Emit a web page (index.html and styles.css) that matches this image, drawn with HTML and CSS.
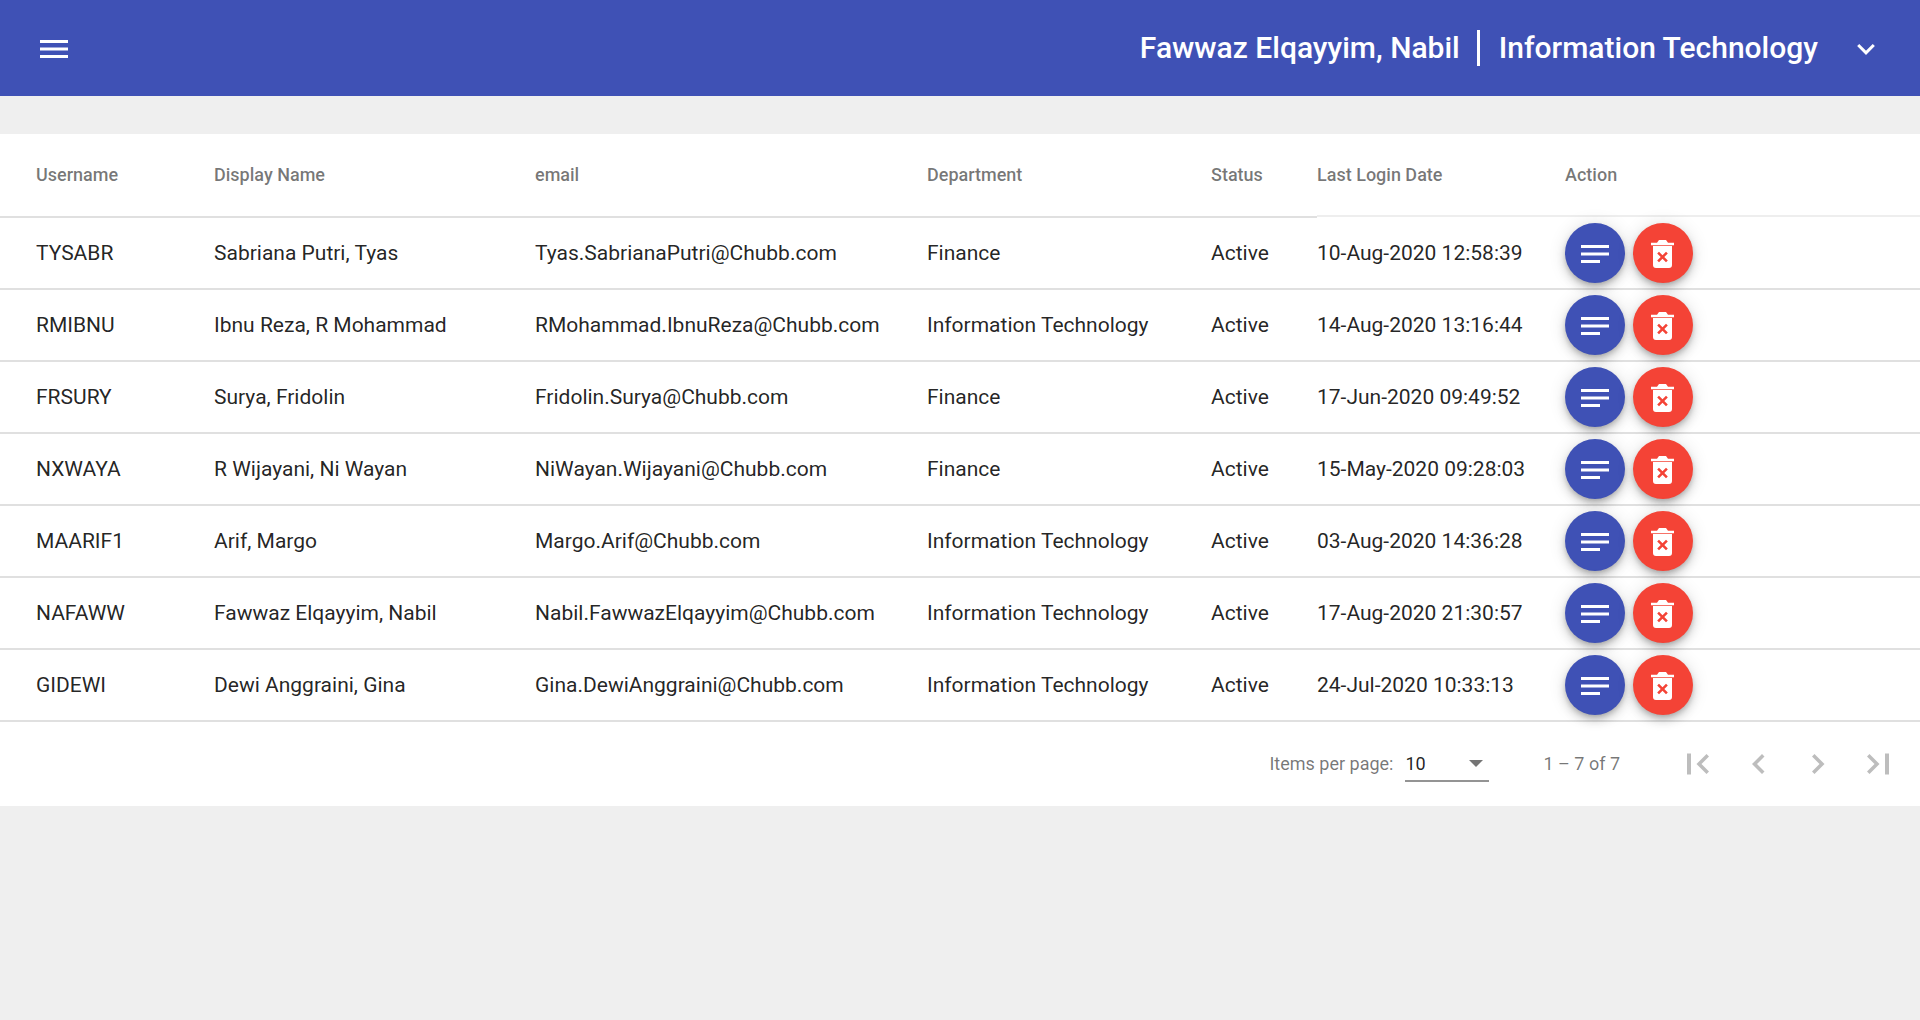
FILE: index.html
```html
<!DOCTYPE html>
<html lang="en">
<head>
<meta charset="utf-8">
<title>Users</title>
<link rel="stylesheet" href="styles.css">
</head>
<body>
<header class="topbar">
  <button class="menu-btn" aria-label="Menu">
    <svg width="28" height="18" viewBox="0 0 28 18"><path d="M0 0h28v3H0zM0 7.500h28v3H0zM0 15h28v3H0z" fill="#fff"/></svg>
  </button>
  <div class="user">
    <span class="user-name">Fawwaz Elqayyim, Nabil</span>
    <span class="user-dept">Information Technology</span>
    <svg class="user-caret" width="20" height="14" viewBox="0 0 20 14"><path d="M2.200 2 10 9.800 17.800 2" fill="none" stroke="#fff" stroke-width="3"/></svg>
  </div>
</header>
<main class="content">
  <section class="card">
    <table class="grid">
      <colgroup>
        <col class="c1"><col class="c2"><col class="c3"><col class="c4"><col class="c5"><col class="c6"><col class="c7">
      </colgroup>
      <thead>
        <tr>
          <th>Username</th><th>Display Name</th><th>email</th><th>Department</th><th>Status</th><th class="th-alt">Last Login Date</th><th class="th-alt">Action</th>
        </tr>
      </thead>
      <tbody>
        <tr><td>TYSABR</td><td>Sabriana Putri, Tyas</td><td>Tyas.SabrianaPutri@Chubb.com</td><td>Finance</td><td>Active</td><td>10-Aug-2020 12:58:39</td><td><div class="actions"><button class="fab fab-blue" aria-label="Details"><svg class="i-notes" viewBox="0 0 28 18"><path d="M0 0h28v3H0zM0 7.500h28v3H0zM0 15h19v3H0z"/></svg></button><button class="fab fab-red" aria-label="Delete"><svg class="i-trash" viewBox="0 0 23 28"><path d="M0 2.800h6L8 0h7l2 2.800h6v2.500H0zM2 6h19v19a3 3 0 0 1-3 3H5a3 3 0 0 1-3-3zM11.500 15.200 8 11.700 6.200 13.500 9.700 17 6.200 20.500 8 22.300 11.500 18.800 15 22.300 16.800 20.500 13.300 17 16.800 13.500 15 11.700z" fill-rule="evenodd"/></svg></button></div></td></tr>
        <tr><td>RMIBNU</td><td>Ibnu Reza, R Mohammad</td><td>RMohammad.IbnuReza@Chubb.com</td><td>Information Technology</td><td>Active</td><td>14-Aug-2020 13:16:44</td><td><div class="actions"><button class="fab fab-blue" aria-label="Details"><svg class="i-notes" viewBox="0 0 28 18"><path d="M0 0h28v3H0zM0 7.500h28v3H0zM0 15h19v3H0z"/></svg></button><button class="fab fab-red" aria-label="Delete"><svg class="i-trash" viewBox="0 0 23 28"><path d="M0 2.800h6L8 0h7l2 2.800h6v2.500H0zM2 6h19v19a3 3 0 0 1-3 3H5a3 3 0 0 1-3-3zM11.500 15.200 8 11.700 6.200 13.500 9.700 17 6.200 20.500 8 22.300 11.500 18.800 15 22.300 16.800 20.500 13.300 17 16.800 13.500 15 11.700z" fill-rule="evenodd"/></svg></button></div></td></tr>
        <tr><td>FRSURY</td><td>Surya, Fridolin</td><td>Fridolin.Surya@Chubb.com</td><td>Finance</td><td>Active</td><td>17-Jun-2020 09:49:52</td><td><div class="actions"><button class="fab fab-blue" aria-label="Details"><svg class="i-notes" viewBox="0 0 28 18"><path d="M0 0h28v3H0zM0 7.500h28v3H0zM0 15h19v3H0z"/></svg></button><button class="fab fab-red" aria-label="Delete"><svg class="i-trash" viewBox="0 0 23 28"><path d="M0 2.800h6L8 0h7l2 2.800h6v2.500H0zM2 6h19v19a3 3 0 0 1-3 3H5a3 3 0 0 1-3-3zM11.500 15.200 8 11.700 6.200 13.500 9.700 17 6.200 20.500 8 22.300 11.500 18.800 15 22.300 16.800 20.500 13.300 17 16.800 13.500 15 11.700z" fill-rule="evenodd"/></svg></button></div></td></tr>
        <tr><td>NXWAYA</td><td>R Wijayani, Ni Wayan</td><td>NiWayan.Wijayani@Chubb.com</td><td>Finance</td><td>Active</td><td>15-May-2020 09:28:03</td><td><div class="actions"><button class="fab fab-blue" aria-label="Details"><svg class="i-notes" viewBox="0 0 28 18"><path d="M0 0h28v3H0zM0 7.500h28v3H0zM0 15h19v3H0z"/></svg></button><button class="fab fab-red" aria-label="Delete"><svg class="i-trash" viewBox="0 0 23 28"><path d="M0 2.800h6L8 0h7l2 2.800h6v2.500H0zM2 6h19v19a3 3 0 0 1-3 3H5a3 3 0 0 1-3-3zM11.500 15.200 8 11.700 6.200 13.500 9.700 17 6.200 20.500 8 22.300 11.500 18.800 15 22.300 16.800 20.500 13.300 17 16.800 13.500 15 11.700z" fill-rule="evenodd"/></svg></button></div></td></tr>
        <tr><td>MAARIF1</td><td>Arif, Margo</td><td>Margo.Arif@Chubb.com</td><td>Information Technology</td><td>Active</td><td>03-Aug-2020 14:36:28</td><td><div class="actions"><button class="fab fab-blue" aria-label="Details"><svg class="i-notes" viewBox="0 0 28 18"><path d="M0 0h28v3H0zM0 7.500h28v3H0zM0 15h19v3H0z"/></svg></button><button class="fab fab-red" aria-label="Delete"><svg class="i-trash" viewBox="0 0 23 28"><path d="M0 2.800h6L8 0h7l2 2.800h6v2.500H0zM2 6h19v19a3 3 0 0 1-3 3H5a3 3 0 0 1-3-3zM11.500 15.200 8 11.700 6.200 13.500 9.700 17 6.200 20.500 8 22.300 11.500 18.800 15 22.300 16.800 20.500 13.300 17 16.800 13.500 15 11.700z" fill-rule="evenodd"/></svg></button></div></td></tr>
        <tr><td>NAFAWW</td><td>Fawwaz Elqayyim, Nabil</td><td>Nabil.FawwazElqayyim@Chubb.com</td><td>Information Technology</td><td>Active</td><td>17-Aug-2020 21:30:57</td><td><div class="actions"><button class="fab fab-blue" aria-label="Details"><svg class="i-notes" viewBox="0 0 28 18"><path d="M0 0h28v3H0zM0 7.500h28v3H0zM0 15h19v3H0z"/></svg></button><button class="fab fab-red" aria-label="Delete"><svg class="i-trash" viewBox="0 0 23 28"><path d="M0 2.800h6L8 0h7l2 2.800h6v2.500H0zM2 6h19v19a3 3 0 0 1-3 3H5a3 3 0 0 1-3-3zM11.500 15.200 8 11.700 6.200 13.500 9.700 17 6.200 20.500 8 22.300 11.500 18.800 15 22.300 16.800 20.500 13.300 17 16.800 13.500 15 11.700z" fill-rule="evenodd"/></svg></button></div></td></tr>
        <tr><td>GIDEWI</td><td>Dewi Anggraini, Gina</td><td>Gina.DewiAnggraini@Chubb.com</td><td>Information Technology</td><td>Active</td><td>24-Jul-2020 10:33:13</td><td><div class="actions"><button class="fab fab-blue" aria-label="Details"><svg class="i-notes" viewBox="0 0 28 18"><path d="M0 0h28v3H0zM0 7.500h28v3H0zM0 15h19v3H0z"/></svg></button><button class="fab fab-red" aria-label="Delete"><svg class="i-trash" viewBox="0 0 23 28"><path d="M0 2.800h6L8 0h7l2 2.800h6v2.500H0zM2 6h19v19a3 3 0 0 1-3 3H5a3 3 0 0 1-3-3zM11.500 15.200 8 11.700 6.200 13.500 9.700 17 6.200 20.500 8 22.300 11.500 18.800 15 22.300 16.800 20.500 13.300 17 16.800 13.500 15 11.700z" fill-rule="evenodd"/></svg></button></div></td></tr>
      </tbody>
    </table>
    <footer class="pager">
      <span class="pager-label">Items per page:</span>
      <div class="pager-select"><span>10</span><i class="pager-arrow"></i></div>
      <span class="pager-range">1 – 7 of 7</span>
      <div class="pager-nav">
        <svg width="60" height="60" viewBox="0 0 60 60"><path d="M19 19.500h4v21h-4zM41 22.500 38.500 20l-10 10 10 10 2.500-2.500-7.500-7.500z"/></svg>
        <svg width="60" height="60" viewBox="0 0 60 60"><path d="M36.500 22.500 34 20 24 30l10 10 2.500-2.500L29 30z"/></svg>
        <svg width="60" height="60" viewBox="0 0 60 60"><path d="M24 22.500 26.500 20l10 10-10 10-2.500-2.500 7.500-7.500z"/></svg>
        <svg width="60" height="60" viewBox="0 0 60 60"><path d="M37 19.500h4v21h-4zM19 22.500 21.500 20l10 10-10 10-2.500-2.500 7.500-7.500z"/></svg>
      </div>
    </footer>
  </section>
</main>
</body>
</html>
```
FILE: styles.css
```css
* { box-sizing: border-box; }
html, body { margin: 0; height: 100%; }
body { background: #efefef; font-family: Roboto, sans-serif; color: rgba(0,0,0,.87); }
button { border: 0; padding: 0; background: none; }

.topbar { height: 96px; background: #3f51b5; display: flex; align-items: center; justify-content: space-between; padding: 0 44px 0 40px; color: #fff; }
.menu-btn { display: flex; margin-top: 2px; }
.user { display: flex; align-items: center; font-size: 30px; font-weight: 500; padding-bottom: 1px; }
.user-name { padding-right: 17px; border-right: 3px solid #fff; line-height: 36px; }
.user-dept { padding-left: 19px; }
.user-caret { margin: 4px 0 0 38px; }

.content { padding-top: 38px; }
.card { background: #fff; }
.grid { width: 100%; border-collapse: separate; border-spacing: 0; table-layout: fixed; }
.c1 { width: 214px; } .c2 { width: 321px; } .c3 { width: 392px; } .c4 { width: 284px; } .c5 { width: 106px; } .c6 { width: 248px; }
th, td { text-align: left; padding: 0; vertical-align: middle; }
th:first-child, td:first-child { padding-left: 36px; }
th { height: 84px; padding-bottom: 2px; font-size: 18px; font-weight: 500; color: rgba(0,0,0,.54); border-bottom: 2px solid #e0e0e0; }
.th-alt { border-bottom: 1px solid #fff; box-shadow: inset 0 -2px 0 #eeeeee; }
td { height: 72px; font-size: 21px; border-bottom: 2px solid #e0e0e0; }

.actions { display: flex; gap: 8px; }
.fab { width: 60px; height: 60px; border-radius: 50%; display: flex; align-items: center; justify-content: center; box-shadow: 0 3px 5px -1px rgba(0,0,0,.2), 0 6px 10px 0 rgba(0,0,0,.14), 0 1px 18px 0 rgba(0,0,0,.12); }
.fab-blue { background: #3f51b5; }
.fab-red { background: #f44336; }
.i-notes { width: 28px; height: 18px; fill: #fff; margin-top: 2px; }
.i-trash { width: 23px; height: 28px; fill: #fff; margin: 1px 1px 0 0; }

.pager { height: 84px; display: flex; align-items: center; justify-content: flex-end; color: rgba(0,0,0,.54); font-size: 18px; padding-right: 12px; }
.pager-label { margin-bottom: 1px; }
.pager-select { width: 84px; height: 36px; margin-left: 12px; border-bottom: 2px solid rgba(0,0,0,.42); color: rgba(0,0,0,.87); display: flex; justify-content: space-between; align-items: center; padding-right: 6px; }
.pager-arrow { width: 0; height: 0; border-left: 7.500px solid transparent; border-right: 7.500px solid transparent; border-top: 7.500px solid rgba(0,0,0,.54); }
.pager-range { margin: 0 0 1px 54px; }
.pager-nav { display: flex; margin-left: 48px; }
.pager-nav svg { fill: rgba(0,0,0,.26); }
```
